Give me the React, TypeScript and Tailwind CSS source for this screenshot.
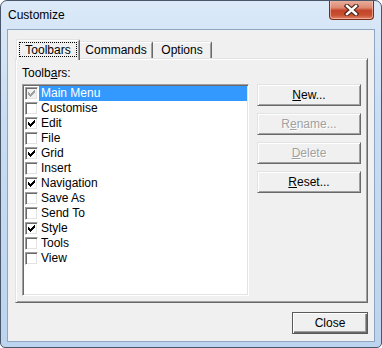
import React from "react";

const items: [string, boolean][] = [
  ["Main Menu", true],
  ["Customise", false],
  ["Edit", true],
  ["File", false],
  ["Grid", true],
  ["Insert", false],
  ["Navigation", true],
  ["Save As", false],
  ["Send To", false],
  ["Style", true],
  ["Tools", false],
  ["View", false],
];

function Check({ color }: { color: string }) {
  const cols: [number, number][] = [
    [2, 3],
    [3, 3],
    [4, 3],
    [3, 3],
    [2, 3],
    [1, 3],
    [0, 3],
  ];
  return (
    <svg width="7" height="7" viewBox="0 0 7 7" shapeRendering="crispEdges" className="block">
      {cols.map(([y, h], i) => (
        <rect key={i} x={i} y={y} width={1} height={h} fill={color} />
      ))}
    </svg>
  );
}

function CheckBox({ checked, disabled }: { checked: boolean; disabled?: boolean }) {
  return (
    <div
      className={
        "w-[13px] h-[13px] shrink-0 border border-t-[#a0a0a0] border-l-[#a0a0a0] border-r-white border-b-white shadow-[inset_1px_1px_0_#696969,inset_-1px_-1px_0_#e3e3e3] flex items-center justify-center " +
        (disabled ? "bg-[#f0f0f0]" : "bg-white")
      }
    >
      {checked && <Check color={disabled ? "#a0a0a0" : "#000000"} />}
    </div>
  );
}

function Btn({
  children,
  disabled,
}: {
  children: React.ReactNode;
  disabled?: boolean;
}) {
  return (
    <div
      className={
        "w-[104px] h-[22px] flex items-center justify-center bg-[#f0f0f0] border border-t-[#e3e3e3] border-l-[#e3e3e3] border-r-[#696969] border-b-[#696969] shadow-[inset_1px_1px_0_#ffffff,inset_-1px_-1px_0_#a0a0a0] text-[12px] " +
        (disabled ? "text-[#a0a0a0] [text-shadow:1px_1px_0_#ffffff]" : "text-black")
      }
    >
      {children}
    </div>
  );
}

export default function App() {
  return (
    <div className="w-[382px] h-[348px] flex flex-col rounded-t-[7px] rounded-b-[5px] border border-[#4a5669] bg-[linear-gradient(180deg,#dbe9f8_0%,#c8ddf3_35%,#bcd4ee_100%)] font-['Liberation_Sans',Arial,sans-serif] text-black overflow-hidden">
      {/* Title bar */}
      <div className="h-[28px] flex shrink-0">
        <div className="flex-1 flex items-center pl-[7px] text-[12px] text-black">Customize</div>
        <div className="mr-[7px] -mt-[1px] w-[45px] h-[20px] rounded-b-[4px] border border-t-0 border-[#7a2c1c] bg-[linear-gradient(180deg,#eab3a4_0%,#dd8a72_40%,#c4452a_55%,#c8502f_80%,#e0876a_100%)] shadow-[inset_0_0_0_1px_rgba(255,210,200,0.55)] flex items-center justify-center">
          <svg width="15" height="12" viewBox="0 0 15 12">
            <path d="M3 2 L12 10 M12 2 L3 10" stroke="#4a2418" strokeWidth="4.6" strokeLinecap="square" />
            <path d="M3 2 L12 10 M12 2 L3 10" stroke="#ffffff" strokeWidth="2.4" strokeLinecap="square" />
          </svg>
        </div>
      </div>

      {/* Client area */}
      <div className="mx-[6px] mb-[5px] flex-1 border border-[#8ea6c1] bg-[#f0f0f0] flex flex-col">
        <div className="pt-[9px] pl-[7px] flex flex-col">
          {/* Tab strip */}
          <div className="h-[21px] -mb-[2px] flex items-end pl-[1px] relative z-10 text-[12px]">
            <div className="w-[64px] h-[21px] rounded-t-[2px] bg-[#f0f0f0] border-t border-l border-r border-t-[#e3e3e3] border-l-[#e3e3e3] border-r-[#696969] shadow-[inset_1px_1px_0_#ffffff,inset_-1px_0_0_#a0a0a0] p-[2px] pb-[3px]">
              <div className="h-full border border-dotted border-black flex items-center justify-center">
                Toolbars
              </div>
            </div>
            <div className="w-[73px] h-[17px] mb-[2px] rounded-tr-[2px] bg-[#f0f0f0] border-t border-r border-t-[#e3e3e3] border-r-[#696969] shadow-[inset_0_1px_0_#ffffff,inset_-1px_0_0_#a0a0a0] flex items-center justify-center">
              Commands
            </div>
            <div className="w-[59px] h-[17px] mb-[2px] rounded-tr-[2px] bg-[#f0f0f0] border-t border-r border-t-[#e3e3e3] border-r-[#696969] shadow-[inset_0_1px_0_#ffffff,inset_-1px_0_0_#a0a0a0] flex items-center justify-center">
              Options
            </div>
          </div>

          {/* Panel */}
          <div className="w-[353px] h-[245px] border border-t-[#e3e3e3] border-l-[#e3e3e3] border-r-[#696969] border-b-[#696969] shadow-[inset_1px_1px_0_#ffffff,inset_-1px_-1px_0_#a0a0a0] pl-[6px] pt-[1px] flex flex-col">
            <div className="h-[24px] pt-[7px] text-[12px] leading-[13px]">
              Toolb<span className="underline underline-offset-[1px]">a</span>rs:
            </div>
            <div className="flex gap-[8px]">
              {/* List */}
              <div className="w-[227px] h-[212px] bg-white border border-t-[#a0a0a0] border-l-[#a0a0a0] border-r-white border-b-white shadow-[inset_1px_1px_0_#696969,inset_-1px_-1px_0_#e3e3e3] p-[1px] flex flex-col">
                {items.map(([label, checked], i) => (
                  <div key={label} className="h-[15px] flex items-center">
                    <div className="ml-[1px] mr-[1px]">
                      <CheckBox checked={checked} disabled={i === 0} />
                    </div>
                    <div
                      className={
                        "flex-1 h-[15px] flex items-center pl-[2px] text-[12px] leading-[15px] " +
                        (i === 0 ? "bg-[#3399ff] text-white" : "text-black")
                      }
                    >
                      {label}
                    </div>
                  </div>
                ))}
              </div>
              {/* Buttons */}
              <div className="flex flex-col gap-[7px]">
                <Btn>
                  <span>
                    <span className="underline underline-offset-[1px]">N</span>ew...
                  </span>
                </Btn>
                <Btn disabled>
                  <span>
                    R<span className="underline underline-offset-[1px]">e</span>name...
                  </span>
                </Btn>
                <Btn disabled>
                  <span>
                    <span className="underline underline-offset-[1px]">D</span>elete
                  </span>
                </Btn>
                <Btn>
                  <span>
                    <span className="underline underline-offset-[1px]">R</span>eset...
                  </span>
                </Btn>
              </div>
            </div>
          </div>

          {/* Close */}
          <div className="w-[353px] flex justify-end mt-[9px]">
            <div className="w-[76px] h-[22px] flex items-center justify-center bg-[#f0f0f0] border border-[#5a5a5a] shadow-[inset_1px_1px_0_#ffffff,inset_-1px_-1px_0_#696969,inset_-2px_-2px_0_#a0a0a0] text-[12px]">
              Close
            </div>
          </div>
        </div>
      </div>
    </div>
  );
}
